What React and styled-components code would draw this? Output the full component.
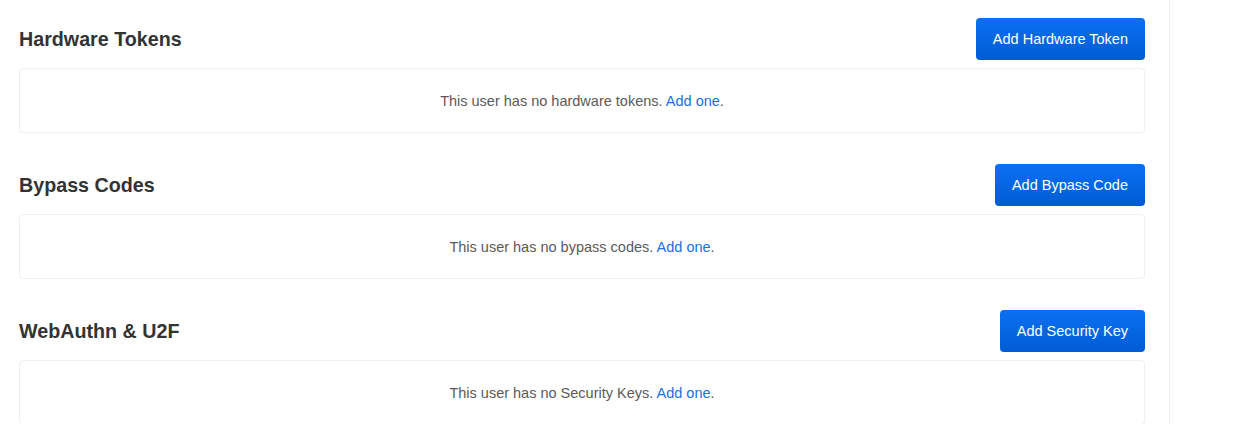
import React from "react";
import styled, { createGlobalStyle } from "styled-components";

const Global = createGlobalStyle`
  html, body { margin: 0; padding: 0; background: #fff; }
  body { font-family: "Liberation Sans", Arial, sans-serif; }
`;

const Page = styled.div`
  display: flex;
  min-height: 424px;
`;

const Main = styled.main`
  width: 1170px;
  box-sizing: border-box;
  padding: 18px 24px 0 19px;
  border-right: 1px solid #f1f1f1;
  display: flex;
  flex-direction: column;
  gap: 31px;
`;

const Aside = styled.aside`
  flex: 1;
`;

const Section = styled.section`
  display: flex;
  flex-direction: column;
  gap: 8px;
`;

const Header = styled.div`
  display: flex;
  align-items: center;
  justify-content: space-between;
  height: 42px;
`;

const Title = styled.h2`
  margin: 0;
  font-size: 19.7px;
  font-weight: 700;
  color: #333;
  line-height: 24px;
`;

const Button = styled.button`
  height: 42px;
  padding: 0 17px;
  border: none;
  border-radius: 4px;
  background: linear-gradient(to bottom, #0a70f2, #005cd4);
  color: #fff;
  font-family: inherit;
  font-size: 14.5px;
  cursor: pointer;
`;

const Empty = styled.div`
  border: 1px solid #efefef;
  border-radius: 4px;
  padding: 23px 16px 21px;
  text-align: center;
  font-size: 14.5px;
  line-height: 19px;
  color: #5a5a5a;
`;

const Link = styled.a`
  color: #1a6fe3;
  text-decoration: none;
`;

const sections = [
  { title: "Hardware Tokens", button: "Add Hardware Token", text: "This user has no hardware tokens." },
  { title: "Bypass Codes", button: "Add Bypass Code", text: "This user has no bypass codes." },
  { title: "WebAuthn & U2F", button: "Add Security Key", text: "This user has no Security Keys." },
];

export default function App() {
  return (
    <>
      <Global />
      <Page>
        <Main>
          {sections.map((s) => (
            <Section key={s.title}>
              <Header>
                <Title>{s.title}</Title>
                <Button>{s.button}</Button>
              </Header>
              <Empty>
                {s.text} <Link href="#">Add one</Link>.
              </Empty>
            </Section>
          ))}
        </Main>
        <Aside />
      </Page>
    </>
  );
}
